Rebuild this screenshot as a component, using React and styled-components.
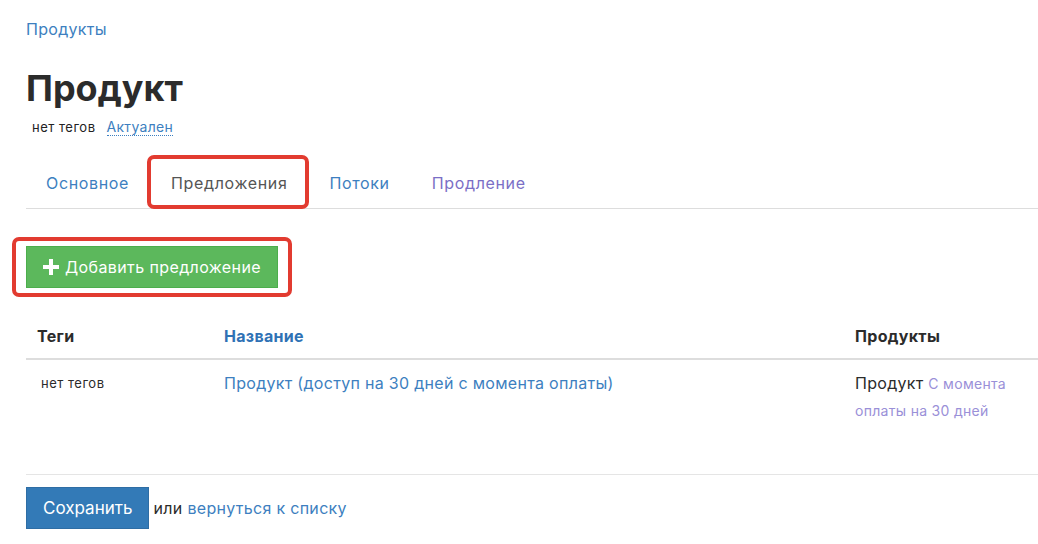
import React from 'react';
import styled, { createGlobalStyle } from 'styled-components';

const GlobalStyle = createGlobalStyle`
    body {
        margin: 0;
        background: #fff;
        font-family: Inter, 'Noto Sans', 'Liberation Sans', sans-serif;
        color: #333;
        letter-spacing: 0.3px;
    }
`;

const Page = styled.div`
    padding: 18px 0 0 26px;
    overflow: hidden;
`;

const Crumb = styled.a`
    display: block;
    font-size: 16px;
    line-height: 22px;
    color: #3d7fc0;
    text-decoration: none;
`;

const Title = styled.h1`
    margin: 28px 0 0;
    font-size: 36px;
    line-height: 40px;
    font-weight: 700;
    color: #2b2b2b;
    letter-spacing: 0;
`;

const Meta = styled.div`
    margin-top: 9px;
    display: flex;
    align-items: baseline;
    gap: 11px;
    padding-left: 6px;
    line-height: 20px;

    .tags {
        font-size: 13px;
        color: #222;
        letter-spacing: 0.5px;
    }

    .status {
        font-size: 14px;
        color: #3d7fc0;
        text-decoration: none;
        border-bottom: 1px dotted #3d7fc0;
        line-height: 17px;
    }
`;

const Tabs = styled.nav`
    margin-top: 21px;
    display: flex;
    border-bottom: 1px solid #dddddd;
`;

const Tab = styled.a`
    display: flex;
    align-items: center;
    height: 50px;
    padding: 0 20px;
    margin-right: 2px;
    font-size: 16px;
    letter-spacing: 0.65px;
    text-decoration: none;
    color: ${(p) => (p.$active ? '#555' : p.$visited ? '#7b6fc6' : '#3d7fc0')};
`;

/* red annotation frame drawn over the element */
const Marked = styled.div`
    position: relative;
    display: inline-flex;

    &::after {
        content: '';
        position: absolute;
        top: ${(p) => p.$top}px;
        bottom: ${(p) => p.$bottom}px;
        left: ${(p) => p.$left}px;
        right: ${(p) => p.$right}px;
        border: 4px solid #e23b30;
        border-radius: 7px;
        pointer-events: none;
    }
`;

const AddButton = styled.button`
    display: inline-flex;
    align-items: center;
    gap: 6px;
    height: 42px;
    padding: 0 16px;
    border: 1px solid #4cae4c;
    background: #5cb85c;
    color: #fff;
    font-family: inherit;
    font-size: 16px;
    letter-spacing: 0.4px;
    cursor: pointer;
`;

const Actions = styled.div`
    margin-top: 37px;
`;

const Grid = styled.div`
    margin-top: 26px;
    display: grid;
    grid-template-columns: 187px 631px 194px;
`;

const Head = styled.div`
    padding: 11px;
    font-size: 16px;
    font-weight: 700;
    line-height: 22px;
    color: ${(p) => (p.$link ? '#2f72b5' : '#2b2b2b')};
    border-bottom: 2px solid #dddddd;
`;

const Cell = styled.div`
    padding: 10px 11px 20px;
    line-height: 26px;
    font-size: 16px;
    color: #2b2b2b;

    &.tags {
        padding-left: 15px;
        font-size: 13px;
        letter-spacing: 0.5px;
    }

    a {
        text-decoration: none;
        color: #3d7fc0;
    }

    .note {
        font-size: 14px;
        line-height: 26px;
        color: #9a90d8;
    }
`;

const Footer = styled.div`
    margin-top: 30px;
    border-top: 1px solid #e5e5e5;
    padding-top: 12px;
    display: flex;
    align-items: center;
    font-size: 16px;

    .or {
        margin-left: 4px;
        color: #2b2b2b;
    }

    a {
        margin-left: 5px;
        color: #3d7fc0;
        text-decoration: none;
    }
`;

const SaveButton = styled.button`
    height: 42px;
    padding: 0 16px;
    border: 1px solid #2e6da4;
    background: #337ab7;
    color: #fff;
    font-family: inherit;
    font-size: 17px;
    letter-spacing: 0;
    cursor: pointer;
`;

const Plus = () => (
    <svg width="16" height="16" viewBox="0 0 16 16">
        <path d="M6 0h4v6h6v4h-6v6H6v-6H0V6h6z" fill="#fff" />
    </svg>
);

export default function App() {
    return (
        <>
            <GlobalStyle />
            <Page>
                <Crumb href="#">Продукты</Crumb>
                <Title>Продукт</Title>
                <Meta>
                    <span className="tags">нет тегов</span>
                    <a className="status" href="#">Актуален</a>
                </Meta>
                <Tabs>
                    <Tab href="#">Основное</Tab>
                    <Marked $top={-3} $bottom={-1} $left={-4} $right={0}>
                        <Tab href="#" $active>Предложения</Tab>
                    </Marked>
                    <Tab href="#">Потоки</Tab>
                    <Tab href="#" $visited>Продление</Tab>
                </Tabs>
                <Actions>
                    <Marked $top={-9} $bottom={-9} $left={-14} $right={-14}>
                        <AddButton>
                            <Plus />
                            Добавить предложение
                        </AddButton>
                    </Marked>
                </Actions>
                <Grid>
                    <Head>Теги</Head>
                    <Head $link>Название</Head>
                    <Head>Продукты</Head>
                    <Cell className="tags">нет тегов</Cell>
                    <Cell>
                        <a href="#">Продукт (доступ на 30 дней с момента оплаты)</a>
                    </Cell>
                    <Cell>
                        Продукт <span className="note">С момента оплаты на 30 дней</span>
                    </Cell>
                </Grid>
                <Footer>
                    <SaveButton>Сохранить</SaveButton>
                    <span className="or">или</span>
                    <a href="#">вернуться к списку</a>
                </Footer>
            </Page>
        </>
    );
}
